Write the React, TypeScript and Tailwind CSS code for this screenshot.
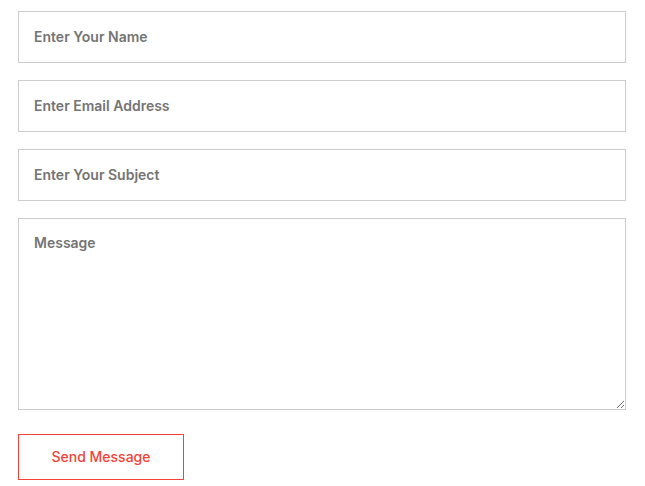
import React from "react";

export default function App() {
  const inputCls =
    "block w-full h-[52px] border border-[#cccccc] bg-white px-[15px] pb-[2px] text-[14px] font-semibold text-[#666] placeholder:text-[#747474] outline-none mb-[17px]";
  return (
    <div className="w-[645px] h-[486px] bg-white pt-[11px] pl-[18px] pr-[19px]" style={{ fontFamily: "Inter, 'Open Sans', sans-serif" }}>
      <form onSubmit={(e) => e.preventDefault()}>
        <input className={inputCls} placeholder="Enter Your Name" />
        <input className={inputCls} placeholder="Enter Email Address" />
        <input className={inputCls} placeholder="Enter Your Subject" />
        <textarea
          className="block w-full h-[192px] border border-[#cccccc] bg-white px-[15px] pt-[13px] text-[14px] font-semibold text-[#666] placeholder:text-[#747474] outline-none"
          placeholder="Message"
        />
        <button
          type="submit"
          className="mt-[24px] w-[166px] h-[46px] border border-[#f44336] pb-[2px] text-[#f44336] text-[14px] font-medium bg-white"
        >
          Send Message
        </button>
      </form>
    </div>
  );
}
